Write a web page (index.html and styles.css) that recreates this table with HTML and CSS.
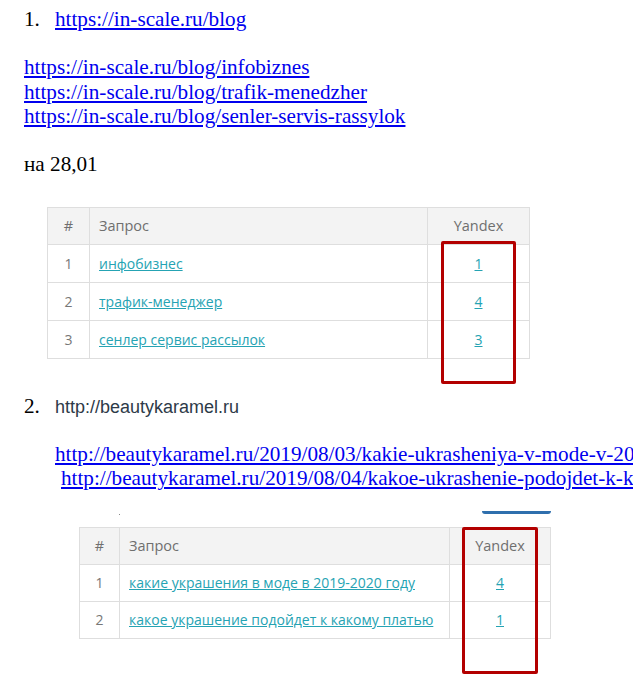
FILE: index.html
```html
<!DOCTYPE html>
<html>
<head>
<meta charset="utf-8">
<link rel="stylesheet" href="styles.css">
</head>
<body>
<div class="page">
  <div class="item item-first">
    <span class="num">1.</span>
    <a class="link" href="#">https://in-scale.ru/blog</a>
  </div>
  <div class="links links-first">
    <a class="link" href="#">https://in-scale.ru/blog/infobiznes</a>
    <a class="link" href="#">https://in-scale.ru/blog/trafik-menedzher</a>
    <a class="link" href="#">https://in-scale.ru/blog/senler-servis-rassylok</a>
  </div>
  <p class="date">на 28,01</p>

  <div class="table-wrap table-wrap-1">
    <table class="stats stats-1">
      <thead>
        <tr><th class="c-num">#</th><th class="c-q">Запрос</th><th class="c-y">Yandex</th></tr>
      </thead>
      <tbody>
        <tr><td class="c-num">1</td><td class="c-q"><a href="#">инфобизнес</a></td><td class="c-y"><a href="#">1</a></td></tr>
        <tr><td class="c-num">2</td><td class="c-q"><a href="#">трафик-менеджер</a></td><td class="c-y"><a href="#">4</a></td></tr>
        <tr><td class="c-num">3</td><td class="c-q"><a href="#">сенлер сервис рассылок</a></td><td class="c-y"><a href="#">3</a></td></tr>
      </tbody>
    </table>
    <div class="mark mark-1"></div>
  </div>

  <div class="item item-second">
    <span class="num">2.</span>
    <span class="site">http://beautykaramel.ru</span>
  </div>
  <div class="links links-second">
    <a class="link" href="#">http://beautykaramel.ru/2019/08/03/kakie-ukrasheniya-v-mode-v-2019-2020-godu</a>
    <a class="link link-shift" href="#">http://beautykaramel.ru/2019/08/04/kakoe-ukrashenie-podojdet-k-kakomu-platyu</a>
  </div>

  <div class="table-wrap table-wrap-2">
    <div class="cut">
      <span class="dot"></span>
      <span class="btn-edge"></span>
    </div>
    <table class="stats stats-2">
      <thead>
        <tr><th class="c-num">#</th><th class="c-q">Запрос</th><th class="c-y">Yandex</th></tr>
      </thead>
      <tbody>
        <tr><td class="c-num">1</td><td class="c-q"><a href="#">какие украшения в моде в 2019-2020 году</a></td><td class="c-y"><a href="#">4</a></td></tr>
        <tr><td class="c-num">2</td><td class="c-q"><a href="#">какое украшение подойдет к какому платью</a></td><td class="c-y"><a href="#">1</a></td></tr>
      </tbody>
    </table>
    <div class="mark mark-2"></div>
  </div>
</div>
</body>
</html>
```

FILE: styles.css
```css
html, body {
  margin: 0;
  padding: 0;
  background: #ffffff;
  overflow: hidden;
}

.page {
  position: relative;
  width: 633px;
  height: 687px;
  overflow: hidden;
  font-family: "Liberation Serif", "Times New Roman", serif;
  font-size: 21.2px;
  color: #000;
}

.link {
  color: #0000ee;
  text-decoration: underline;
  white-space: nowrap;
}

.item {
  display: flex;
  align-items: baseline;
  line-height: 24px;
  white-space: nowrap;
}

.num {
  width: 31px;
  padding-left: 24px;
  flex: none;
}

.item-first {
  margin-top: 7px;
}

.links {
  display: flex;
  flex-direction: column;
  line-height: 24.5px;
  white-space: nowrap;
}

.links-first {
  margin-top: 24px;
  padding-left: 24px;
}

.date {
  margin: 23px 0 0 24px;
  line-height: 24px;
}

.table-wrap {
  position: relative;
}

.table-wrap-1 {
  margin: 31px 0 0 47px;
  width: 483px;
}

.stats {
  border-collapse: collapse;
  font-family: "Open Sans", "Liberation Sans", sans-serif;
  font-size: 14px;
  color: #777;
}

.stats th,
.stats td {
  border: 1px solid #dedede;
  padding: 0 9px;
  text-align: left;
  font-weight: normal;
}

.stats thead th {
  background: #f3f3f3;
  color: #6f6f6f;
  font-size: 14.5px;
}

.stats .c-num,
.stats .c-y {
  text-align: center;
}

.stats td a {
  color: #25a3b3;
  text-decoration: underline;
}

.stats-1 {
  width: 483px;
}
.stats-1 th { height: 36px; }
.stats-1 td { height: 37px; }
.stats-1 .c-num { width: 23px; }
.stats-1 .c-y { width: 83px; }

.mark {
  position: absolute;
  border: 3px solid #b30000;
  border-radius: 2px;
}

.mark-1 {
  left: 394px;
  top: 34px;
  width: 69px;
  height: 137px;
}

.item-second {
  margin-top: 35px;
}

.site {
  font-family: "Liberation Sans", Arial, sans-serif;
  font-size: 18px;
  color: #2d3a48;
}

.links-second {
  margin-top: 23px;
  padding-left: 55px;
}

.link-shift {
  margin-left: 6px;
}

.table-wrap-2 {
  margin: 23px 0 0 79px;
  width: 472px;
}

.cut {
  position: relative;
  height: 13px;
}

.dot {
  position: absolute;
  left: 40px;
  top: 0;
  width: 1px;
  height: 1px;
  background: #888;
}

.btn-edge {
  position: absolute;
  left: 403px;
  top: -3px;
  width: 69px;
  height: 3px;
  background: #2f6fad;
  border-radius: 0 0 4px 4px;
}

.stats-2 {
  width: 472px;
}
.stats-2 th { height: 36px; }
.stats-2 td { height: 36px; }
.stats-2 .c-num { width: 21px; }
.stats-2 .c-y { width: 82px; }

.mark-2 {
  left: 383px;
  top: 13px;
  width: 70px;
  height: 141px;
}
```
